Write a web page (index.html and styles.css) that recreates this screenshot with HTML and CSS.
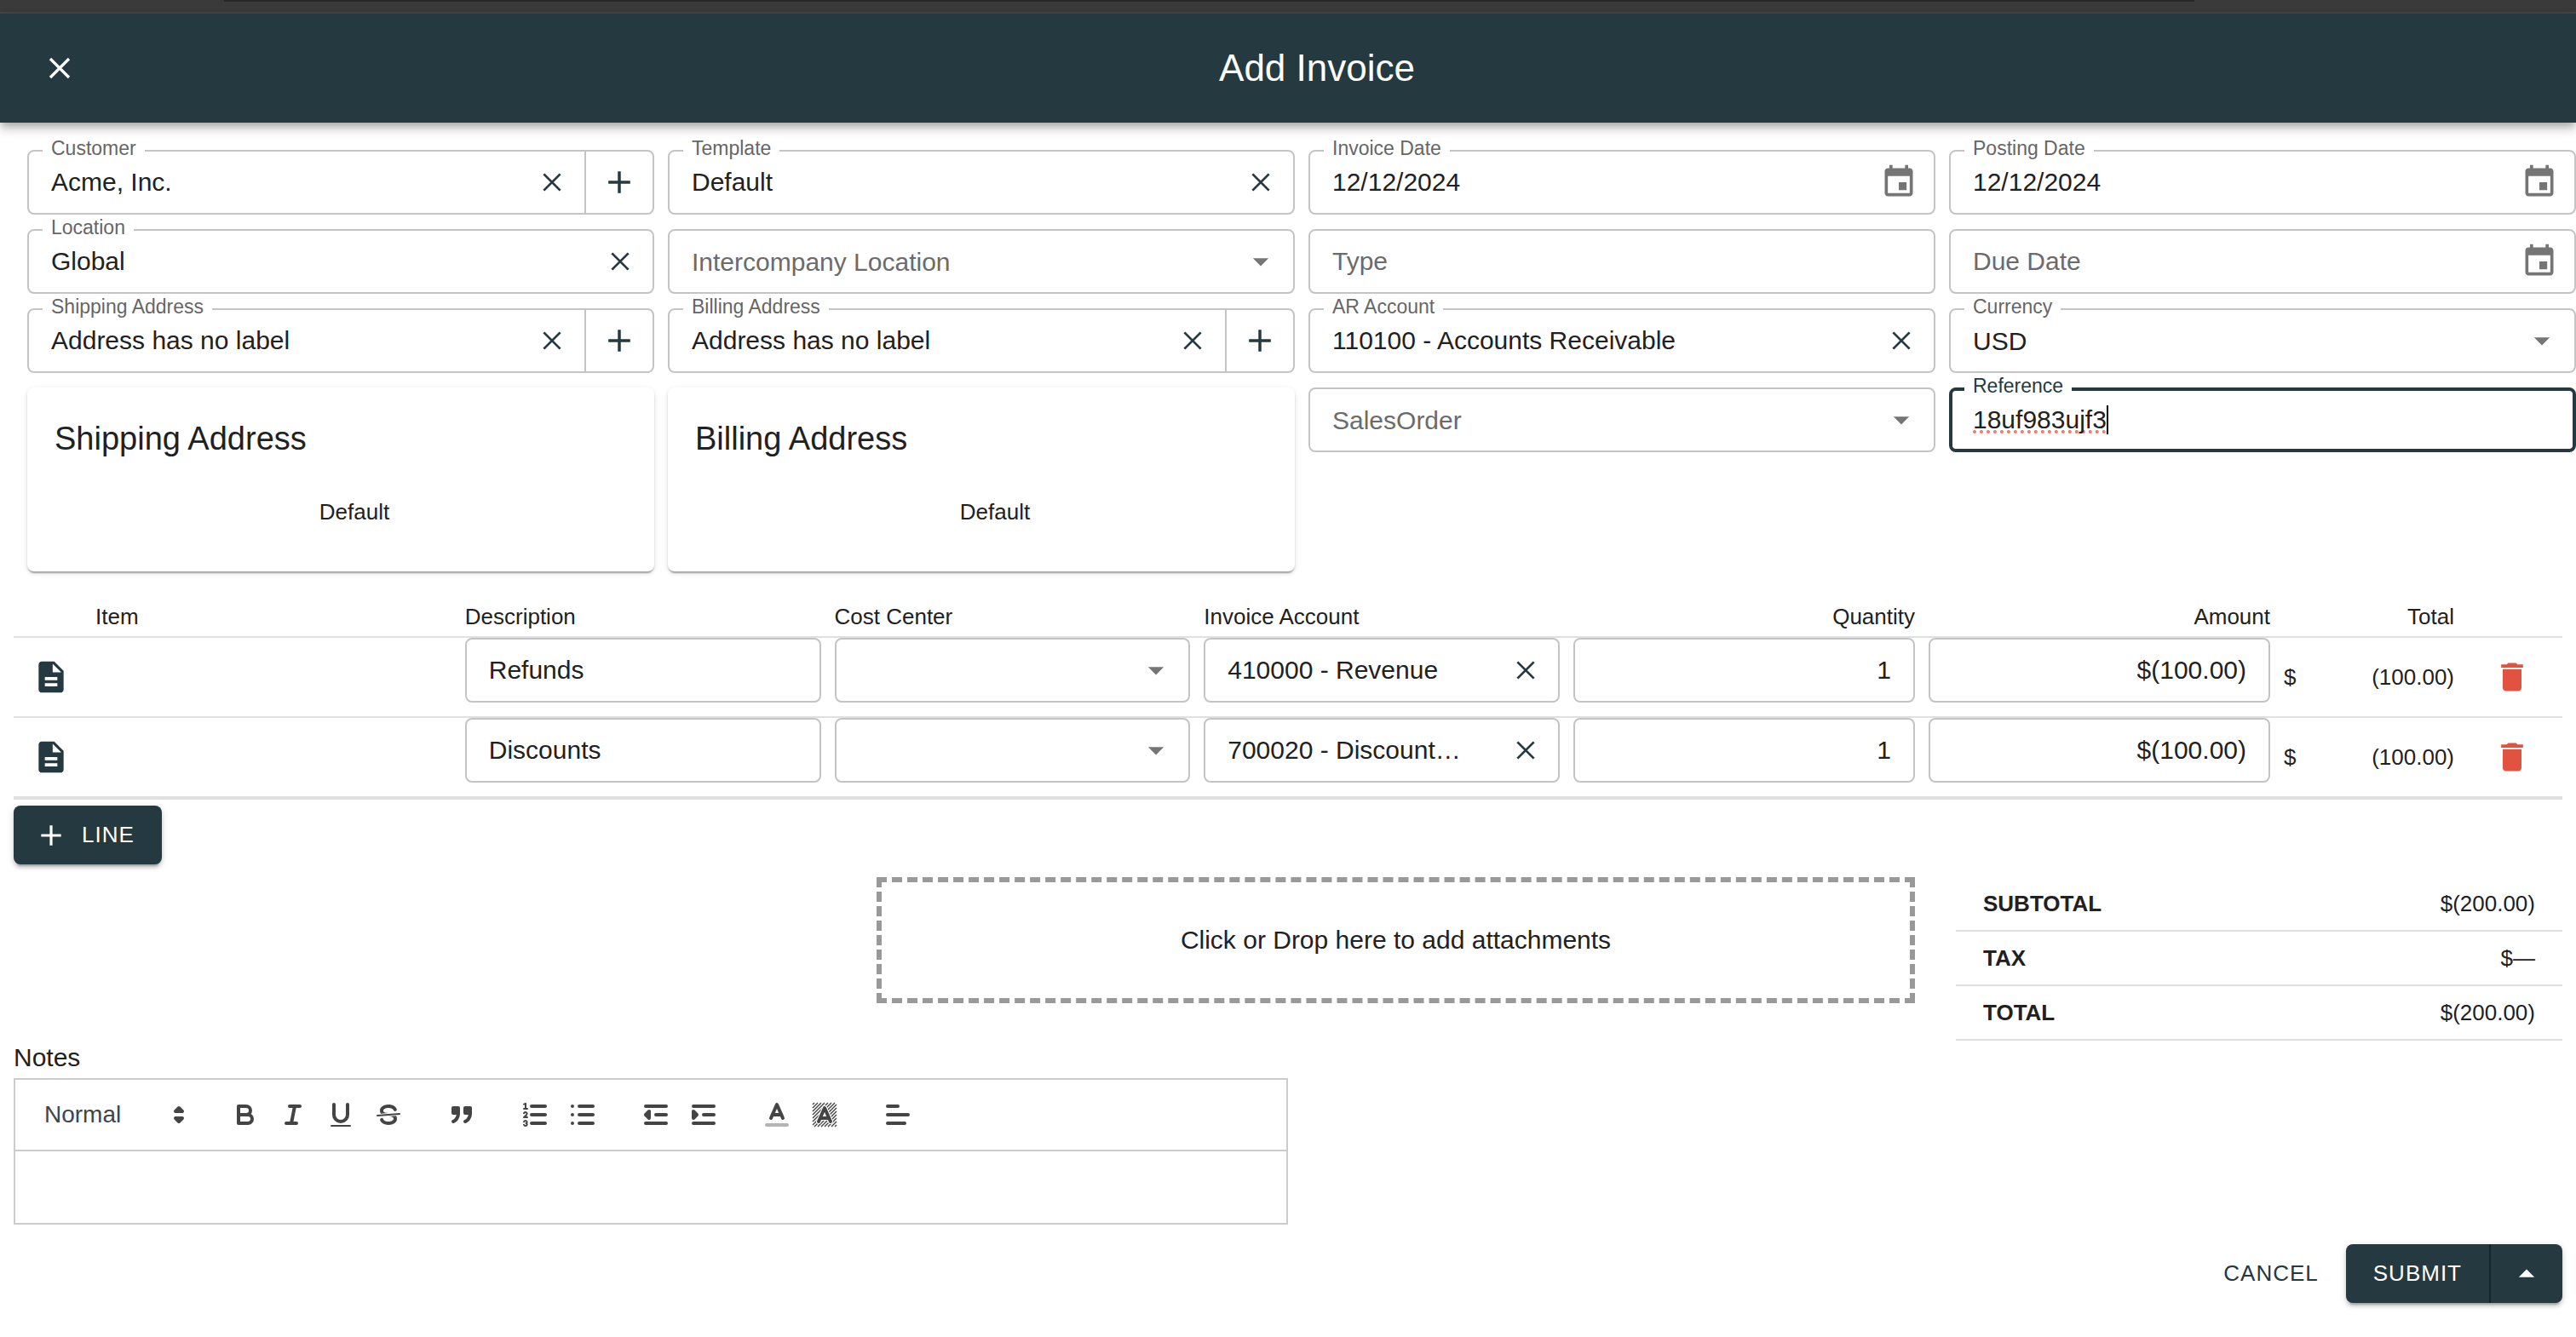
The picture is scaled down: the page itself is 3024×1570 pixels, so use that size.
FILE: index.html
```html
<!DOCTYPE html>
<html lang="en">
<head>
    <meta charset="UTF-8">
    <meta name="viewport" content="width=device-width, initial-scale=1.0">
    <title>Add Invoice</title>
    <link rel="stylesheet" href="styles.css">
</head>
<body>
    <!-- shared icons -->
    <svg class="sprite" aria-hidden="true">
        <symbol id="i-close" viewBox="0 0 24 24"><path d="M6.5 6.5l11 11M17.5 6.5l-11 11" fill="none" stroke="currentColor" stroke-width="1.6"/></symbol>
        <symbol id="i-plus" viewBox="0 0 24 24"><path d="M12 5v14M5 12h14" fill="none" stroke="currentColor" stroke-width="1.9"/></symbol>
        <symbol id="i-down" viewBox="0 0 24 24"><path d="M7 10l5 5 5-5z"/></symbol>
        <symbol id="i-up" viewBox="0 0 24 24"><path d="M7 14l5-5 5 5z"/></symbol>
        <symbol id="i-event" viewBox="0 0 24 24"><path d="M17 12h-5v5h5v-5zM16 1v2H8V1H6v2H5c-1.11 0-1.99.9-1.99 2L3 19c0 1.1.89 2 2 2h14c1.1 0 2-.9 2-2V5c0-1.1-.9-2-2-2h-1V1h-2zm3 18H5V8h14v11z"/></symbol>
        <symbol id="i-doc" viewBox="0 0 24 24"><path d="M14 2H6c-1.1 0-1.99.9-1.99 2L4 20c0 1.1.89 2 1.99 2H18c1.1 0 2-.9 2-2V8l-6-6zm2 16H8v-2h8v2zm0-4H8v-2h8v2zm-3-5V3.5l5.5 5.5H13z"/></symbol>
        <symbol id="i-trash" viewBox="0 0 24 24"><path d="M6 19c0 1.1.9 2 2 2h8c1.1 0 2-.9 2-2V7H6v12zM19 4h-3.500l-1-1h-5l-1 1H5v2h14V4z"/></symbol>
    </svg>

    <div class="window-edge"><div class="window-tab"></div></div>

    <header class="app-bar">
        <button type="button" class="app-bar-close" aria-label="Close"><svg class="icon"><use href="#i-close"/></svg></button>
        <h1>Add Invoice</h1>
    </header>

    <form class="invoice-form">
        <div class="form-grid">
            <div class="field">
                <label for="customer">Customer</label>
                <input id="customer" type="text" value="Acme, Inc.">
                <button type="button" class="field-btn" aria-label="Clear customer"><svg class="icon icon-sm"><use href="#i-close"/></svg></button>
                <button type="button" class="field-btn field-add" aria-label="Add customer"><svg class="icon"><use href="#i-plus"/></svg></button>
            </div>
            <div class="field">
                <label for="template">Template</label>
                <input id="template" type="text" value="Default">
                <button type="button" class="field-btn" aria-label="Clear template"><svg class="icon icon-sm"><use href="#i-close"/></svg></button>
            </div>
            <div class="field">
                <label for="invoiceDate">Invoice Date</label>
                <input id="invoiceDate" type="text" value="12/12/2024">
                <button type="button" class="field-btn field-date" aria-label="Pick invoice date"><svg class="icon"><use href="#i-event"/></svg></button>
            </div>
            <div class="field">
                <label for="postingDate">Posting Date</label>
                <input id="postingDate" type="text" value="12/12/2024">
                <button type="button" class="field-btn field-date" aria-label="Pick posting date"><svg class="icon"><use href="#i-event"/></svg></button>
            </div>

            <div class="field">
                <label for="location">Location</label>
                <input id="location" type="text" value="Global">
                <button type="button" class="field-btn" aria-label="Clear location"><svg class="icon icon-sm"><use href="#i-close"/></svg></button>
            </div>
            <div class="field">
                <select class="empty" aria-label="Intercompany Location"><option>Intercompany Location</option></select>
                <svg class="icon arrow"><use href="#i-down"/></svg>
            </div>
            <div class="field">
                <input type="text" placeholder="Type" aria-label="Type">
            </div>
            <div class="field">
                <input type="text" placeholder="Due Date" aria-label="Due Date">
                <button type="button" class="field-btn field-date" aria-label="Pick due date"><svg class="icon"><use href="#i-event"/></svg></button>
            </div>

            <div class="field">
                <label for="shipping">Shipping Address</label>
                <input id="shipping" type="text" value="Address has no label">
                <button type="button" class="field-btn" aria-label="Clear shipping address"><svg class="icon icon-sm"><use href="#i-close"/></svg></button>
                <button type="button" class="field-btn field-add" aria-label="Add shipping address"><svg class="icon"><use href="#i-plus"/></svg></button>
            </div>
            <div class="field">
                <label for="billing">Billing Address</label>
                <input id="billing" type="text" value="Address has no label">
                <button type="button" class="field-btn" aria-label="Clear billing address"><svg class="icon icon-sm"><use href="#i-close"/></svg></button>
                <button type="button" class="field-btn field-add" aria-label="Add billing address"><svg class="icon"><use href="#i-plus"/></svg></button>
            </div>
            <div class="field">
                <label for="arAccount">AR Account</label>
                <input id="arAccount" type="text" value="110100 - Accounts Receivable">
                <button type="button" class="field-btn" aria-label="Clear AR account"><svg class="icon icon-sm"><use href="#i-close"/></svg></button>
            </div>
            <div class="field">
                <label for="currency">Currency</label>
                <select id="currency"><option>USD</option></select>
                <svg class="icon arrow"><use href="#i-down"/></svg>
            </div>

            <div class="address-card">
                <h2>Shipping Address</h2>
                <p>Default</p>
            </div>
            <div class="address-card">
                <h2>Billing Address</h2>
                <p>Default</p>
            </div>
            <div class="field">
                <select class="empty" aria-label="SalesOrder"><option>SalesOrder</option></select>
                <svg class="icon arrow"><use href="#i-down"/></svg>
            </div>
            <div class="field focused">
                <label for="reference">Reference</label>
                <input id="reference" class="misspelled" type="text" value="18uf983ujf3" spellcheck="false">
                <span class="caret"></span>
            </div>
        </div>

        <div class="content">
            <table class="lines">
                <colgroup>
                    <col class="col-icon"><col><col><col><col>
                    <col class="col-number"><col class="col-number">
                    <col class="col-total"><col class="col-delete">
                </colgroup>
                <thead>
                    <tr>
                        <th></th>
                        <th>Item</th>
                        <th>Description</th>
                        <th>Cost Center</th>
                        <th>Invoice Account</th>
                        <th class="right">Quantity</th>
                        <th class="right">Amount</th>
                        <th class="right">Total</th>
                        <th></th>
                    </tr>
                </thead>
                <tbody>
                    <tr>
                        <td class="cell-doc"><svg class="icon"><use href="#i-doc"/></svg></td>
                        <td></td>
                        <td class="cell-field"><div class="field"><input type="text" value="Refunds" aria-label="Description"></div></td>
                        <td class="cell-field"><div class="field"><select aria-label="Cost Center"><option></option></select><svg class="icon arrow"><use href="#i-down"/></svg></div></td>
                        <td class="cell-field"><div class="field"><input type="text" value="410000 - Revenue" aria-label="Invoice Account"><button type="button" class="field-btn" aria-label="Clear account"><svg class="icon icon-sm"><use href="#i-close"/></svg></button></div></td>
                        <td class="cell-field"><div class="field"><input class="right" type="text" value="1" aria-label="Quantity"></div></td>
                        <td class="cell-field"><div class="field"><input class="right" type="text" value="$(100.00)" aria-label="Amount"></div></td>
                        <td><div class="money"><span>$</span><span>(100.00)</span></div></td>
                        <td><button type="button" class="delete" aria-label="Delete line"><svg class="icon"><use href="#i-trash"/></svg></button></td>
                    </tr>
                    <tr>
                        <td class="cell-doc"><svg class="icon"><use href="#i-doc"/></svg></td>
                        <td></td>
                        <td class="cell-field"><div class="field"><input type="text" value="Discounts" aria-label="Description"></div></td>
                        <td class="cell-field"><div class="field"><select aria-label="Cost Center"><option></option></select><svg class="icon arrow"><use href="#i-down"/></svg></div></td>
                        <td class="cell-field"><div class="field"><input type="text" value="700020 - Discount…" aria-label="Invoice Account"><button type="button" class="field-btn" aria-label="Clear account"><svg class="icon icon-sm"><use href="#i-close"/></svg></button></div></td>
                        <td class="cell-field"><div class="field"><input class="right" type="text" value="1" aria-label="Quantity"></div></td>
                        <td class="cell-field"><div class="field"><input class="right" type="text" value="$(100.00)" aria-label="Amount"></div></td>
                        <td><div class="money"><span>$</span><span>(100.00)</span></div></td>
                        <td><button type="button" class="delete" aria-label="Delete line"><svg class="icon"><use href="#i-trash"/></svg></button></td>
                    </tr>
                </tbody>
            </table>

            <button type="button" class="btn btn-primary btn-line"><svg class="icon icon-plus"><use href="#i-plus"/></svg>LINE</button>

            <div class="summary">
                <div></div>
                <button type="button" class="dropzone">Click or Drop here to add attachments</button>
                <table class="totals">
                    <tr><th>SUBTOTAL</th><td>$(200.00)</td></tr>
                    <tr><th>TAX</th><td>$—</td></tr>
                    <tr><th>TOTAL</th><td>$(200.00)</td></tr>
                </table>
            </div>

            <label class="notes-label" for="notes">Notes</label>
            <div class="editor">
                <div class="toolbar">
                    <button type="button" class="picker">Normal
                        <svg viewBox="0 0 18 18"><polygon class="fs" points="7 11 9 13 11 11 7 11"/><polygon class="fs" points="7 7 9 5 11 7 7 7"/></svg>
                    </button>
                    <div class="formats">
                        <button type="button" aria-label="Bold"><svg viewBox="0 0 18 18"><path d="M5,4H9.5A2.5,2.5,0,0,1,12,6.5v0A2.5,2.5,0,0,1,9.5,9H5V4Z"/><path d="M5,9h5.5A2.5,2.5,0,0,1,13,11.5v0A2.5,2.5,0,0,1,10.5,14H5V9Z"/></svg></button>
                        <button type="button" aria-label="Italic"><svg viewBox="0 0 18 18"><path d="M7 4h6M5 14h6M8 14l2-10"/></svg></button>
                        <button type="button" aria-label="Underline"><svg viewBox="0 0 18 18"><path d="M5,3V9a4,4,0,0,0,8,0V3"/><rect class="f" x="3" y="15" width="12" height="1" rx=".5"/></svg></button>
                        <button type="button" aria-label="Strike"><svg viewBox="0 0 18 18"><path class="thin" d="M15.5 8.5l-13 1"/><path class="f" d="M9.007,8C6.542,7.791,6,7.519,6,6.5,6,5.792,7.283,5,9,5c1.571,0,2.765.679,2.969,1.309a1,1,0,0,0,1.9-.617C13.356,4.106,11.354,3,9,3,6.2,3,4,4.538,4,6.5a3.2,3.2,0,0,0,.5,1.843Z"/><path class="f" d="M8.984,10C11.457,10.208,12,10.479,12,11.5c0,.708-1.283,1.5-3,1.5-1.571,0-2.765-.679-2.969-1.309a1,1,0,1,0-1.9.617C4.644,13.894,6.646,15,9,15c2.8,0,5-1.538,5-3.5a3.2,3.2,0,0,0-.5-1.843Z"/></svg></button>
                    </div>
                    <div class="formats">
                        <button type="button" aria-label="Quote"><svg viewBox="0 0 18 18"><rect class="fs" x="4" y="5" width="3" height="3"/><rect class="fs" x="11" y="5" width="3" height="3"/><path class="fs" d="M7,8c0,4.031-3,5-3,5"/><path class="fs" d="M14,8c0,4.031-3,5-3,5"/></svg></button>
                    </div>
                    <div class="formats">
                        <button type="button" aria-label="Ordered list"><svg viewBox="0 0 18 18"><path d="M7 4h8M7 9h8M7 14h8"/><path class="thin" d="M2.5 5.5h2"/><path class="f" d="M3.5,6A0.5,0.5,0,0,1,3,5.5V3.085l-0.276.138A0.5,0.5,0,0,1,2.053,3c-0.124-.247-0.023-0.324.224-0.447l1-.5A0.5,0.5,0,0,1,4,2.5v3A0.5,0.5,0,0,1,3.5,6Z"/><path class="thin" d="M4.5,10.5h-2c0-.234,1.85-1.076,1.85-2.234A0.959,0.959,0,0,0,2.5,8.156"/><path class="thin" d="M2.5,14.846a0.959,0.959,0,0,0,1.85-.109A0.7,0.7,0,0,0,3.75,14a0.688,0.688,0,0,0,.6-0.736,0.959,0.959,0,0,0-1.85-.109"/></svg></button>
                        <button type="button" aria-label="Bullet list"><svg viewBox="0 0 18 18"><path d="M7 4h8M7 9h8M7 14h8M3 4h0M3 9h0M3 14h0"/></svg></button>
                    </div>
                    <div class="formats">
                        <button type="button" aria-label="Outdent"><svg viewBox="0 0 18 18"><path d="M3 14h12M3 4h12M9 9h6"/><polyline class="fs" points="5 7 5 11 3 9 5 7"/></svg></button>
                        <button type="button" aria-label="Indent"><svg viewBox="0 0 18 18"><path d="M3 14h12M3 4h12M9 9h6"/><polyline class="fs" points="3 7 3 11 5 9 3 7"/></svg></button>
                    </div>
                    <div class="formats">
                        <button type="button" aria-label="Text color"><svg viewBox="0 0 18 18"><path class="faded" d="M3 15h12"/><polyline points="5.5 11 9 3 12.5 11"/><path d="M11.63 9h-5.25"/></svg></button>
                        <button type="button" aria-label="Background color"><svg viewBox="0 0 18 18">
                            <path class="hatch" d="M2 3l1-1M2 5l3-3M2 7l5-5M2 9l7-7M2 11l9-9M2 13l11-11M2 15l13-13M3 16l13-13M5 16l11-11M7 16l9-9M9 16l7-7M11 16l5-5M13 16l3-3M15 16l1-1"/>
                            <path class="halo" d="M5.5 13L9 5l3.5 8M11.63 11h-5.25"/>
                            <path d="M5.5 13L9 5l3.5 8M11.63 11h-5.25"/></svg></button>
                    </div>
                    <div class="formats">
                        <button type="button" aria-label="Align"><svg viewBox="0 0 18 18"><path d="M3 4h6M3 9h12M3 14h10"/></svg></button>
                    </div>
                </div>
                <textarea id="notes" rows="1"></textarea>
            </div>

            <div class="actions">
                <button type="button" class="btn btn-text">CANCEL</button>
                <div class="btn-group">
                    <button type="button" class="btn">SUBMIT</button>
                    <button type="button" class="btn btn-more" aria-label="More submit options"><svg class="icon"><use href="#i-up"/></svg></button>
                </div>
            </div>
        </div>
    </form>
</body>
</html>
```

FILE: styles.css
```css
* {
    margin: 0;
    padding: 0;
    box-sizing: border-box;
}

body {
    font-family: "Liberation Sans", Arial, Helvetica, sans-serif;
    font-size: 30px;
    color: #212121;
    background: #fff;
}

button,
input,
select,
textarea {
    font: inherit;
    color: inherit;
    background: none;
    border: none;
    outline: none;
}

button {
    cursor: pointer;
}

.sprite {
    display: none;
}

.icon {
    display: block;
    flex: none;
    width: 44px;
    height: 44px;
    fill: currentColor;
}

.right {
    text-align: right;
}

/* top bar */
.window-edge {
    height: 16px;
    background: #3b3b3b;
    border-bottom: 2px solid #464646;
}

.window-tab {
    height: 2px;
    margin: 0 14.8% 0 8.7%;
    background: #282828;
}

.app-bar {
    display: flex;
    align-items: center;
    height: 128px;
    padding: 0 48px 0 24px;
    color: #fff;
    background: #243940;
    box-shadow: 0 4px 8px -2px rgba(0, 0, 0, 0.2), 0 8px 10px rgba(0, 0, 0, 0.14), 0 2px 20px rgba(0, 0, 0, 0.12);
}

.app-bar-close {
    padding: 22px;
}

.app-bar-close .icon {
    width: 48px;
    height: 48px;
}

.app-bar h1 {
    flex: 1;
    font-size: 44px;
    font-weight: normal;
    text-align: center;
}

/* fields */
.form-grid {
    display: grid;
    grid-template-columns: repeat(4, minmax(0, 1fr));
    align-items: start;
    gap: 17px 16px;
    padding: 32px 0 0 32px;
}

.field {
    position: relative;
    display: flex;
    align-items: center;
    height: 76px;
    border: 2px solid #c4c4c4;
    border-radius: 8px;
}

.field label {
    position: absolute;
    top: -16px;
    left: 16px;
    padding: 0 10px;
    font-size: 23px;
    line-height: 24px;
    color: #666;
    background: #fff;
}

.field input,
.field select {
    flex: 1;
    min-width: 0;
    height: 100%;
    padding: 0 26px;
    appearance: none;
}

.field input::placeholder,
.field .empty {
    color: #6b6b6b;
    opacity: 1;
}

.field-btn {
    display: flex;
    align-items: center;
    justify-content: center;
    width: 76px;
    height: 100%;
    color: #243940;
}

.field-btn .icon-sm {
    width: 42px;
    height: 42px;
}

.field-add {
    width: 80px;
    border-left: 2px solid #c4c4c4;
}

.field-date {
    width: 82px;
    color: #757575;
}

.arrow {
    position: absolute;
    top: 14px;
    right: 16px;
    color: #757575;
    pointer-events: none;
}

.field.focused {
    border: 4px solid #243940;
}

.field.focused label {
    top: -18px;
    left: 14px;
    color: #243940;
}

.field .misspelled {
    flex: none;
    field-sizing: content;
    padding: 0 0 0 24px;
    text-decoration: underline dotted #f2766c 4px;
    text-underline-offset: 2px;
    text-decoration-skip-ink: none;
}

.caret {
    width: 2px;
    height: 34px;
    background: #000;
}

.address-card {
    height: 216px;
    padding: 36px 0 0 32px;
    border-radius: 8px;
    box-shadow: 0 4px 2px -2px rgba(0, 0, 0, 0.2), 0 2px 2px rgba(0, 0, 0, 0.14), 0 2px 6px rgba(0, 0, 0, 0.12);
}

.address-card h2 {
    font-size: 38px;
    font-weight: normal;
    line-height: 48px;
}

.address-card p {
    margin-top: 47px;
    font-size: 26px;
    line-height: 30px;
    text-align: center;
}

/* invoice lines */
.content {
    padding: 30px 16px;
}

.lines {
    width: 100%;
    table-layout: fixed;
    border-collapse: separate;
    border-spacing: 0;
    font-size: 26px;
    border-bottom: 2px solid #e0e0e0;
}

.col-icon {
    width: 96px;
}

.col-number {
    width: 417px;
}

.col-total {
    width: 216px;
}

.col-delete {
    width: 111px;
}

.lines th {
    height: 48px;
    padding-right: 16px;
    font-weight: normal;
    text-align: left;
    border-bottom: 2px solid #e0e0e0;
}

.lines th.right {
    text-align: right;
}

.lines td {
    height: 94px;
    padding-right: 16px;
    border-bottom: 2px solid #e0e0e0;
}

.lines .cell-field {
    vertical-align: top;
    font-size: 30px;
}

.lines .cell-doc {
    padding-left: 22px;
    color: #243940;
}

.money {
    display: flex;
    justify-content: space-between;
}

.delete {
    display: block;
    margin-left: 30px;
    color: #e15241;
}

/* buttons */
.btn {
    display: flex;
    align-items: center;
    height: 69px;
    padding: 0 32px;
    font-size: 26px;
    letter-spacing: 1px;
    border-radius: 8px;
}

.btn-primary,
.btn-group {
    color: #fff;
    background: #243940;
    border-radius: 8px;
    box-shadow: 0 6px 2px -4px rgba(0, 0, 0, 0.2), 0 4px 4px rgba(0, 0, 0, 0.14), 0 2px 10px rgba(0, 0, 0, 0.12);
}

.btn-line {
    gap: 16px;
    margin-top: 7px;
    padding: 0 32px 0 24px;
}

.icon-plus {
    width: 40px;
    height: 40px;
}

.btn-text {
    padding: 0 16px;
    color: #243940;
}

.btn-group {
    display: flex;
}

.btn-more {
    padding: 0 20px;
    border-left: 2px solid #162529;
    border-radius: 0;
}

/* attachments and totals */
.summary {
    display: grid;
    grid-template-columns: 965fr 1219fr 712fr;
    gap: 48px;
    align-items: start;
    margin-top: 15px;
}

.dropzone {
    height: 148px;
    border: 6px dashed #999;
}

.totals {
    width: 100%;
    border-spacing: 0;
    font-size: 26px;
}

.totals th,
.totals td {
    height: 64px;
    padding: 0 32px;
    text-align: left;
    border-bottom: 2px solid #e0e0e0;
}

.totals td {
    text-align: right;
}

/* notes editor */
.notes-label {
    display: block;
    margin-bottom: 4px;
    line-height: 40px;
}

.editor {
    width: 50%;
    border: 2px solid #ccc;
}

.toolbar {
    display: flex;
    gap: 30px;
    padding: 16px;
    color: #444;
    border-bottom: 2px solid #ccc;
}

.toolbar svg {
    display: block;
    width: 36px;
    height: 36px;
    fill: none;
    stroke: #444;
    stroke-width: 2;
    stroke-linecap: round;
    stroke-linejoin: round;
}

.toolbar .f {
    fill: #444;
    stroke: none;
}

.toolbar .fs {
    fill: #444;
}

.toolbar .thin {
    stroke-width: 1;
}

.toolbar .faded {
    opacity: 0.4;
}

.toolbar .hatch {
    stroke-width: 0.7;
    stroke-linecap: butt;
}

.toolbar .halo {
    stroke: #fff;
    stroke-width: 3;
}

.picker {
    display: flex;
    align-items: center;
    justify-content: space-between;
    width: 196px;
    height: 50px;
    padding: 0 2px 0 18px;
    font-size: 28px;
}

.formats {
    display: flex;
}

.formats button {
    width: 56px;
    height: 50px;
    padding: 7px 10px;
}

.editor textarea {
    display: block;
    width: 100%;
    height: 84px;
    padding: 24px 30px;
    resize: none;
}

.actions {
    display: flex;
    justify-content: flex-end;
    gap: 16px;
    margin-top: 23px;
}
```
